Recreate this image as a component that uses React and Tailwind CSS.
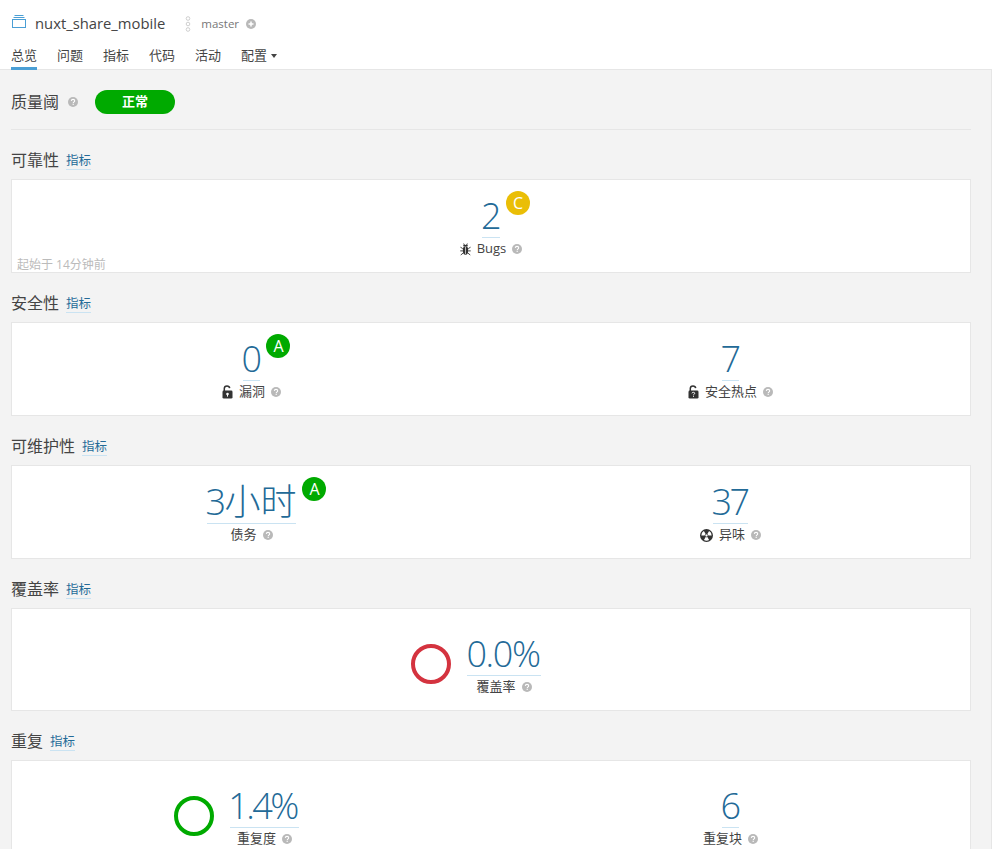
import React from "react";

const FONT = { fontFamily: '"Open Sans", "Noto Sans CJK SC", sans-serif' };

function Help({ className = "" }) {
  return (
    <svg viewBox="0 0 10 10" className={`w-[10px] h-[10px] shrink-0 ${className}`}>
      <circle cx="5" cy="5" r="5" fill="#b9b9b9" />
      <path d="M3.3 3.9C3.4 2.9 4.1 2.4 5 2.4c1 0 1.7.6 1.7 1.4 0 .7-.4 1-.9 1.3-.4.3-.5.4-.5.9" fill="none" stroke="#fff" strokeWidth="1.1" />
      <rect x="4.6" y="6.7" width="1.2" height="1.2" fill="#fff" />
    </svg>
  );
}

function Bug() {
  return (
    <svg viewBox="0 0 12 14" className="w-[11px] h-[13px]" fill="none" stroke="#333" strokeWidth="1">
      <ellipse cx="6" cy="8" rx="3" ry="4.6" fill="#333" stroke="none" />
      <path d="M3.6 2.8h4.8" strokeWidth="1.6" />
      <path d="M4 .5l1 2M8 .5l-1 2M3 6L.5 4.5M9 6l2.500-1.500M3 8.500H.3M9 8.500h2.700M3.300 11L.8 13M8.700 11l2.500 2" />
      <path d="M6 4v8" stroke="#fff" strokeWidth=".7" />
    </svg>
  );
}

function LockOpen({ question }) {
  return (
    <svg viewBox="0 0 11 14" className="w-[11px] h-[14px]">
      <path d="M2.300 6V3.600C2.300 1.900 3.600.9 5 .9c1.400 0 2.500.9 2.700 2.200" fill="none" stroke="#333" strokeWidth="1.500" />
      <rect x=".5" y="5.600" width="10" height="7.900" rx="1.300" fill="#333" />
      {question ? (
        <>
          <path d="M4 8.300c.1-.7.6-1 1.400-1 .8 0 1.300.4 1.300 1 0 .5-.3.800-.7 1-.4.300-.5.400-.5.800" fill="none" stroke="#fff" strokeWidth="1" />
          <rect x="5" y="10.800" width="1" height="1" fill="#fff" />
        </>
      ) : (
        <>
          <circle cx="5.500" cy="9" r="1.300" fill="#fff" />
          <rect x="5" y="9" width="1" height="2.600" fill="#fff" />
        </>
      )}
    </svg>
  );
}

function Smell() {
  return (
    <svg viewBox="0 0 14 14" className="w-[13px] h-[13px]">
      <circle cx="7" cy="7" r="7" fill="#333" />
      <path d="M7 7L4.200 2.200A5.500 5.500 0 0 1 9.800 2.200Z M7 7h5.600a5.500 5.500 0 0 1-2.800 4.800Z M7 7L4.200 11.800A5.500 5.500 0 0 1 1.400 7Z" fill="#fff" transform="rotate(60 7 7)" />
      <circle cx="7" cy="7" r="1.500" fill="#fff" stroke="#333" strokeWidth=".8" />
    </svg>
  );
}

function Num({ children }) {
  return <span className="inline-block -translate-x-[1px] tracking-[-2.600px]">{children}</span>;
}

function Metric({ value, label, icon, rating, ratingColor = "bg-[#00aa00]" }) {
  return (
    <div className="flex flex-col items-center">
      <div className="relative h-[49px] border-b border-[#cae3f2] text-[36px] font-light leading-[54px] text-[#236a97] whitespace-nowrap">
        {value}
        {rating && (
          <span className={`absolute top-[2px] left-full ml-[6px] flex h-6 w-6 items-center justify-center rounded-full text-[16px] font-normal leading-none text-white ${ratingColor}`}>
            {rating}
          </span>
        )}
      </div>
      <div className="mt-[2px] flex h-[18px] items-center gap-[6px] whitespace-nowrap text-[13px] text-[#444]">
        {icon}
        <span>{label}</span>
        <Help />
      </div>
    </div>
  );
}

function Ring({ color }) {
  return <div className={`h-10 w-10 shrink-0 rounded-full border-4 ${color}`} />;
}

function Section({ title, children, className = "" }) {
  return (
    <section className="mt-[20px]">
      <div className="flex h-[29px] items-start">
        <h3 className="text-[16px] leading-[21px] text-[#444]">{title}</h3>
        <a className="ml-[7px] mt-[2px] h-[18px] border-b border-[#cae3f2] text-[12.500px] leading-[17px] text-[#236a97]">指标</a>
      </div>
      <div className={`relative border border-[#e6e6e6] bg-white ${className}`}>{children}</div>
    </section>
  );
}

export default function App() {
  return (
    <div className="h-[849px] w-[992px] overflow-hidden bg-white" style={FONT}>
      <header className="h-[69px] pl-[11px]">
        <div className="flex h-[46px] items-center pt-[1px]">
          <svg viewBox="0 0 15 13" className="mb-[4px] h-[13px] w-[15px] shrink-0" fill="none" stroke="#4b9fd5" strokeWidth="1">
            <rect x="1.500" y="4.500" width="13" height="8" />
            <path d="M2.500 2.500h11M3.500 .5h9" />
          </svg>
          <span className="ml-[9px] text-[14.800px] text-[#444]">nuxt_share_mobile</span>
          <svg viewBox="0 0 6 16" className="ml-[20px] h-[16px] w-[6px] shrink-0" fill="none" stroke="#cfcfcf" strokeWidth="1">
            <circle cx="3" cy="2.500" r="1.800" />
            <circle cx="3" cy="8" r="1.800" />
            <circle cx="3" cy="13.500" r="1.800" />
          </svg>
          <span className="ml-[10px] text-[11.500px] text-[#777]">master</span>
          <svg viewBox="0 0 10 10" className="ml-[7px] h-[10px] w-[10px] shrink-0">
            <circle cx="5" cy="5" r="5" fill="#b9b9b9" />
            <path d="M2.500 5h5M5 2.500v5" stroke="#fff" strokeWidth="1.500" />
          </svg>
        </div>
        <nav className="relative flex h-[23px] items-start gap-[20px] text-[13px] text-[#444]">
          <a className="h-[24px] border-b-[3px] border-[#4b9fd5] leading-[18px]">总览</a>
          <a className="leading-[18px]">问题</a>
          <a className="leading-[18px]">指标</a>
          <a className="leading-[18px]">代码</a>
          <a className="leading-[18px]">活动</a>
          <a className="flex items-center gap-[4px] leading-[18px]">
            配置
            <span className="mt-[1px] h-0 w-0 border-x-[3.500px] border-t-[4px] border-x-transparent border-t-[#444]" />
          </a>
        </nav>
      </header>

      <main className="h-[780px] border-r border-t border-[#e6e6e6] bg-[#f3f3f3] pl-[11px] pr-[20px]">
        <div className="flex h-[60px] items-center border-b border-[#e6e6e6] pt-[5px]">
          <span className="text-[16px] text-[#444]">质量阈</span>
          <Help className="ml-[9px]" />
          <span className="ml-[17px] flex h-6 w-20 items-center justify-center rounded-full bg-[#00aa00] text-[13px] font-semibold text-white">正常</span>
        </div>

        <Section title="可靠性" className="h-[94px] pt-[9px]">
          <div className="flex justify-center">
            <Metric value={<Num>2</Num>} label="Bugs" icon={<Bug />} rating="C" ratingColor="bg-[#eabe06]" />
          </div>
          <span className="absolute bottom-0 left-[5px] text-[12px] leading-[15px] text-[#bbb]">起始于 14分钟前</span>
        </Section>

        <Section title="安全性" className="h-[94px] pt-[9px]">
          <div className="grid grid-cols-2">
            <div className="flex justify-center">
              <Metric value={<Num>0</Num>} label="漏洞" icon={<LockOpen />} rating="A" />
            </div>
            <div className="flex justify-center">
              <Metric value={<Num>7</Num>} label="安全热点" icon={<LockOpen question />} />
            </div>
          </div>
        </Section>

        <Section title="可维护性" className="h-[94px] pt-[9px]">
          <div className="grid grid-cols-2">
            <div className="flex justify-center">
              <Metric value={<><span className="inline-block -translate-x-[1px] tracking-[-2.600px]">3</span>小时</>} label="债务" rating="A" />
            </div>
            <div className="flex justify-center">
              <Metric value={<Num>37</Num>} label="异味" icon={<Smell />} />
            </div>
          </div>
        </Section>

        <Section title="覆盖率" className="h-[103px] pt-[18px]">
          <div className="flex justify-center pr-[30px]">
            <div className="flex gap-4 pt-[17px]">
              <Ring color="border-[#d4333f]" />
              <div className="mt-[-17px]">
                <Metric value={<span className="inline-block -translate-x-[1px] tracking-[-1.400px]">0.0%</span>} label="覆盖率" />
              </div>
            </div>
          </div>
        </Section>

        <Section title="重复" className="h-[120px] pt-[18px]">
          <div className="grid grid-cols-2">
            <div className="flex justify-center pr-[30px]">
              <div className="flex gap-4 pt-[17px]">
                <Ring color="border-[#00aa00]" />
                <div className="mt-[-17px]">
                  <Metric value={<span className="inline-block -translate-x-[2px] tracking-[-2.600px]">1.4%</span>} label="重复度" />
                </div>
              </div>
            </div>
            <div className="flex justify-center">
              <Metric value={<Num>6</Num>} label="重复块" />
            </div>
          </div>
        </Section>
      </main>
    </div>
  );
}
